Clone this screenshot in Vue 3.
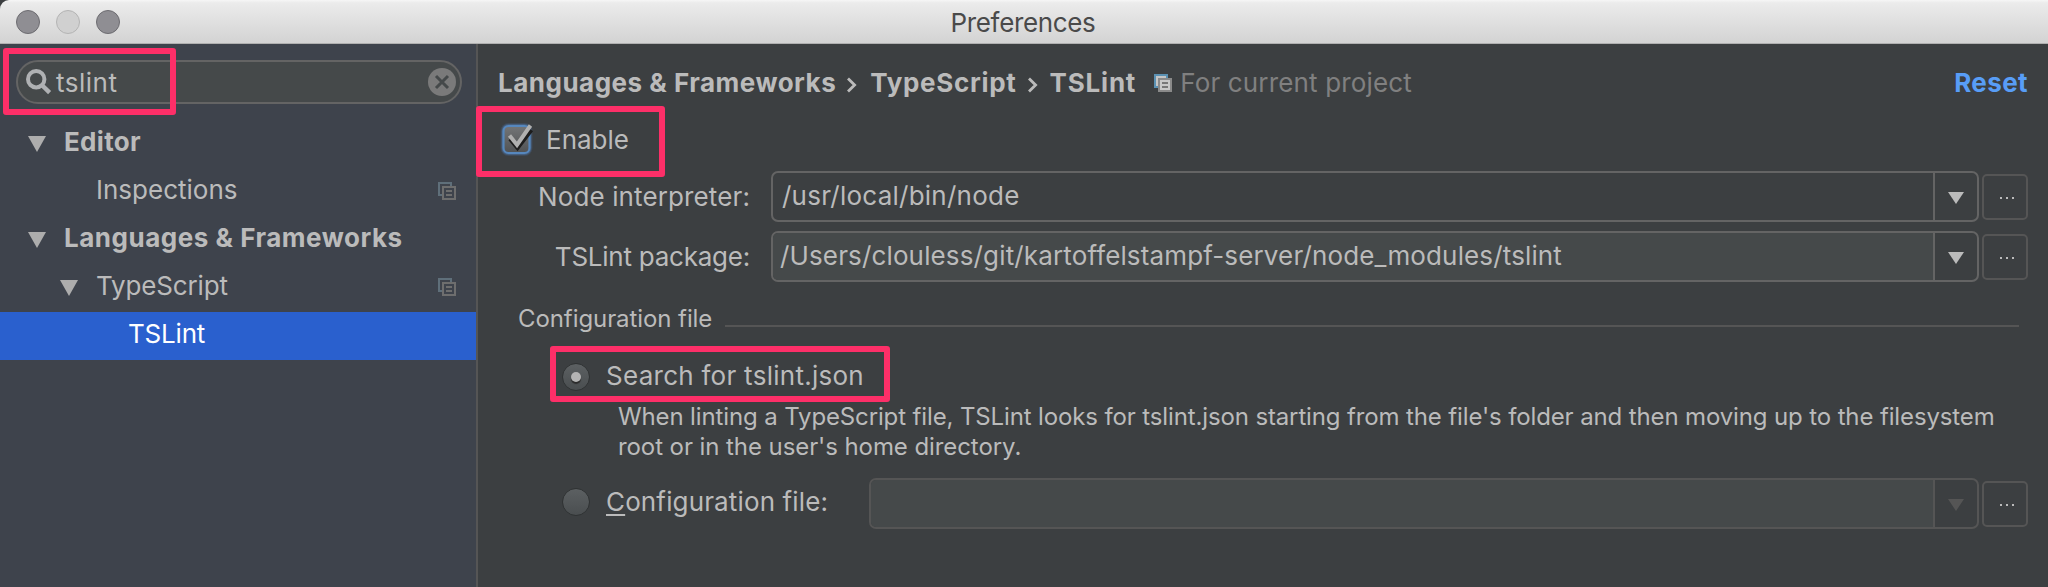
<script setup>
const tree = [
  { label: 'Editor', level: 0, bold: true, open: true, cls: 't-editor' },
  { label: 'Inspections', level: 1, copy: true, cls: 't-insp' },
  { label: 'Languages & Frameworks', level: 0, bold: true, open: true, cls: 't-lang' },
  { label: 'TypeScript', level: 1, open: true, copy: true, cls: 't-ts' },
  { label: 'TSLint', level: 2, selected: true, cls: 't-lint' },
]
</script>

<template>
  <div class="window">
    <header class="titlebar">
      <i class="light"></i><i class="light pale"></i><i class="light"></i>
      <span class="title">Preferences</span>
    </header>
    <div class="body">
      <aside class="sidebar">
        <div class="search">
          <svg class="lens" width="26" height="26" viewBox="0 0 26 26"><circle cx="10.2" cy="10.2" r="8.2" fill="none" stroke="#afb1b3" stroke-width="4" /><path d="M15.8 16 23.6 23.6" stroke="#afb1b3" stroke-width="4.4" /></svg>
          <span class="query">tslint</span>
          <svg class="clear" width="28" height="28" viewBox="0 0 28 28"><circle cx="14" cy="14" r="14" fill="#7a7a7a" /><path d="M8 8 20 20M20 8 8 20" stroke="#45494a" stroke-width="3" /></svg>
        </div>
        <div class="tree">
          <div v-for="n in tree" :key="n.label" class="node" :class="['l' + n.level, { selected: n.selected, bold: n.bold }]">
            <span class="arrow"><svg v-if="n.open" width="18" height="16" viewBox="0 0 18 16"><path d="M0 0H18L9 16Z" fill="#adadad" /></svg></span>
            <span class="label" :class="n.cls">{{ n.label }}</span>
            <svg v-if="n.copy" class="copy" width="18" height="18" viewBox="0 0 18 18" fill="none" stroke-width="2"><path d="M4 13H1V1H13V4" stroke="#5f6f7a" /><path d="M5 5H17V17H5ZM8 9H14M8 13H14" stroke="#6e6e6e" /></svg>
          </div>
        </div>
      </aside>
      <main class="content">
        <div class="crumbs">
          <b class="c1">Languages &amp; Frameworks</b>
          <svg class="chev" width="12" height="18" viewBox="0 0 12 18"><path d="M2 2.5 8.6 9 2 15.5" fill="none" stroke="#bbb" stroke-width="2.8" /></svg>
          <b class="c2">TypeScript</b>
          <svg class="chev" width="12" height="18" viewBox="0 0 12 18"><path d="M2 2.5 8.6 9 2 15.5" fill="none" stroke="#bbb" stroke-width="2.8" /></svg>
          <b class="c3">TSLint</b>
          <svg class="scope" width="18" height="18" viewBox="0 0 18 18" fill="none" stroke-width="2"><path d="M2 2H12V4H4V12H2Z" fill="#c5c5c5" /><path d="M4 13H1V1H13V4" stroke="#5b91b3" /><path d="M5 5H17V17H5Z" fill="#c8c8c8" stroke="#8a8a8a" /><path d="M8 9H14M8 13H14" stroke="#777" /></svg>
          <span class="muted">For current project</span>
          <b class="reset">Reset</b>
        </div>

        <div class="enable">
          <svg class="check" width="40" height="40" viewBox="0 0 40 40">
            <defs><linearGradient id="cb" x1="0" y1="0" x2="0" y2="1"><stop offset="0" stop-color="#737577" /><stop offset="1" stop-color="#505254" /></linearGradient></defs>
            <rect x="3.5" y="5" width="32" height="33" rx="8" fill="#43566d" opacity=".5" />
            <rect x="4.5" y="6" width="30" height="31" rx="7" fill="#465f7e" />
            <rect x="6.5" y="8" width="26" height="27" rx="5" fill="url(#cb)" stroke="#5687bd" stroke-width="2.2" />
            <path d="M13 21 20.5 30 34.5 12" fill="none" stroke="#1d1d1d" stroke-width="4" />
            <path d="M12.5 17.5 20 27 33.5 7.5" fill="none" stroke="#b0b0b0" stroke-width="4" />
          </svg>
          <span class="en">Enable</span>
        </div>

        <div class="field">
          <label class="ni">Node interpreter:</label>
          <div class="combo"><span class="value v1">/usr/local/bin/node</span><span class="drop"><i></i></span></div>
          <button class="more"><i></i><i></i><i></i></button>
        </div>
        <div class="field filled second">
          <label class="tp">TSLint package:</label>
          <div class="combo"><span class="value v2">/Users/clouless/git/kartoffelstampf-server/node_modules/tslint</span><span class="drop"><i></i></span></div>
          <button class="more"><i></i><i></i><i></i></button>
        </div>

        <div class="section"><span class="cf">Configuration file</span><hr /></div>

        <div class="option">
          <span class="radio"><i></i></span><span class="sf">Search for tslint.json</span>
        </div>
        <p class="hint"><span class="h1">When linting a TypeScript file, TSLint looks for tslint.json starting from the file's folder and then moving up to the filesystem</span><br /><span class="h2">root or in the user's home directory.</span></p>
        <div class="field filled disabled">
          <span class="radio"></span>
          <span class="cfl"><span class="mn">C</span>onfiguration file:</span>
          <div class="combo"><span class="value"></span><span class="drop"><i></i></span></div>
          <button class="more"><i></i><i></i><i></i></button>
        </div>
      </main>
    </div>
    <div class="mark mark-search"></div>
    <div class="mark mark-enable"></div>
    <div class="mark mark-option"></div>
  </div>
</template>

<style>
body { background: #3c3f41; overflow: hidden; }
</style>

<style scoped>
.window { position: relative; width: 2048px; height: 587px; overflow: hidden; display: flex; flex-direction: column; background: #3c3f41; color: #bbb; font-family: Inter, "Liberation Sans", sans-serif; font-size: 26px; line-height: 32px; white-space: nowrap; box-sizing: border-box; }
.window * { box-sizing: border-box; }
svg { display: block; flex: none; }
.titlebar { height: 44px; flex: none; display: flex; align-items: center; gap: 16px; padding-left: 16px; background: linear-gradient(#f6f6f6, #ebebeb 3px, #d3d3d3); border-bottom: 1px solid #b0b0b0; border-top-left-radius: 9px; color: #4a4a4a; }
.light { width: 24px; height: 24px; border-radius: 50%; background: #8f8e93; border: 1px solid #6d6c71; }
.light.pale { background: #d0d0d0; border-color: #b4b4b4; }
.title { flex: 1; text-align: center; padding: 2px 138px 0 0; letter-spacing: -.35px; }
.body { flex: 1; display: flex; min-height: 0; }
.sidebar { width: 478px; flex: none; background: #3e434c; border-right: 2px solid #555; padding-top: 16px; }
.search { height: 44px; width: 446px; margin-left: 16px; border: 2px solid #646464; border-radius: 22px; background: #45494a; display: flex; align-items: center; padding: 0 4px 0 8px; }
.clear { margin-left: auto; }
.query { margin-left: 4px; padding-top: 1px; letter-spacing: .5px; }
.tree { margin-top: 16px; }
.node { height: 48px; display: flex; align-items: center; padding-right: 20px; }
.label { margin-bottom: 4px; }
.l0 { padding-left: 28px; }
.l1 { padding-left: 60px; }
.l2 { padding-left: 92px; }
.arrow { width: 36px; }
.copy { margin-left: auto; margin-bottom: 2px; }
.t-lang { letter-spacing: .52px; }
.t-editor { letter-spacing: .3px; }
.t-ts { letter-spacing: -.15px; }
.t-lint { letter-spacing: -.2px; }
.bold { font-weight: 700; }
.selected { background: #2a60ce; color: #fff; }
.content { flex: 1; min-width: 0; }
.crumbs { display: flex; align-items: center; height: 32px; margin: 23px 20px 0 20px; }
.c1 { letter-spacing: .5px; }
.c2 { letter-spacing: .7px; }
.c3 { letter-spacing: .8px; margin-left: -1px; }
.reset { margin-left: auto; color: #589df6; letter-spacing: .4px; }
.muted { color: #808080; margin-left: 8px; letter-spacing: .15px; }
.chev { margin: 4px 12px 0 10px; }
.scope { margin-left: 18px; }
.enable { display: flex; align-items: center; height: 40px; margin: 19px 0 0 19px; }
.en { margin-left: 9px; padding-top: 3px; }
.field { display: flex; align-items: center; height: 51px; margin-top: 13px; }
.second { margin-top: 9px; }
.field label { width: 272px; text-align: right; margin-right: 21px; }
.ni { letter-spacing: .12px; }
.tp { letter-spacing: -.24px; }
.combo { flex: 1; height: 51px; border: 2px solid #646464; border-radius: 7px; display: flex; overflow: hidden; }
.value { flex: 1; padding: 7px 8px; }
.v1 { letter-spacing: .24px; padding-left: 9px; }
.v2 { letter-spacing: .14px; padding-left: 7px; }
.filled .value { background: #45494a; }
.drop { width: 44px; border-left: 2px solid #646464; display: flex; align-items: center; justify-content: center; }
.drop i { border: 8px solid transparent; border-top: 12px solid #bbb; border-bottom: 0; margin-top: 2px; }
.more { width: 46px; height: 46px; margin: 0 20px 0 3px; padding: 3px 0 0 4px; background: none; border: 2px solid #555; border-radius: 5px; display: flex; align-items: center; justify-content: center; gap: 4px; }
.more i { width: 2px; height: 2px; background: #bbb; }
.section { display: flex; align-items: center; margin: 21px 29px 0 40px; font-size: 24px; }
.cf { letter-spacing: -.08px; }
.section hr { flex: 1; height: 2px; border: 0; margin: 14px 0 0 13px; background: #555; }
.option { display: flex; align-items: center; margin: 26px 0 0 84px; height: 32px; }
.radio { width: 28px; height: 28px; flex: none; border-radius: 50%; background: linear-gradient(#5c6062, #4a4e50); border: 1px solid #2f3233; display: flex; align-items: center; justify-content: center; }
.radio i { width: 10px; height: 10px; border-radius: 50%; background: #b4b4b4; box-shadow: 0 2px 1px #2b2b2b; }
.sf, .cfl { margin-left: 16px; }
.sf { letter-spacing: .27px; padding-bottom: 2px; }
.hint { margin: 9px 0 0 140px; font-size: 24px; line-height: 30px; }
.h1 { letter-spacing: -.13px; }
.h2 { letter-spacing: -.08px; }
.disabled { margin-top: 16px; padding-left: 84px; }
.disabled .radio { margin-bottom: 3px; }
.disabled .combo, .disabled .drop { border-color: #555; }
.disabled .drop i { border-top-color: #555; }
.cfl { width: 263px; letter-spacing: .14px; padding-bottom: 3px; }
.mn { text-decoration: underline; text-decoration-thickness: 2px; text-underline-offset: 3px; text-decoration-skip-ink: none; }
.mark { position: absolute; border: 6px solid #fd2f68; border-radius: 3px; }
.mark-search { left: 3px; top: 48px; width: 173px; height: 67px; }
.mark-enable { left: 476px; top: 106px; width: 189px; height: 71px; }
.mark-option { left: 550px; top: 346px; width: 340px; height: 56px; }
</style>
